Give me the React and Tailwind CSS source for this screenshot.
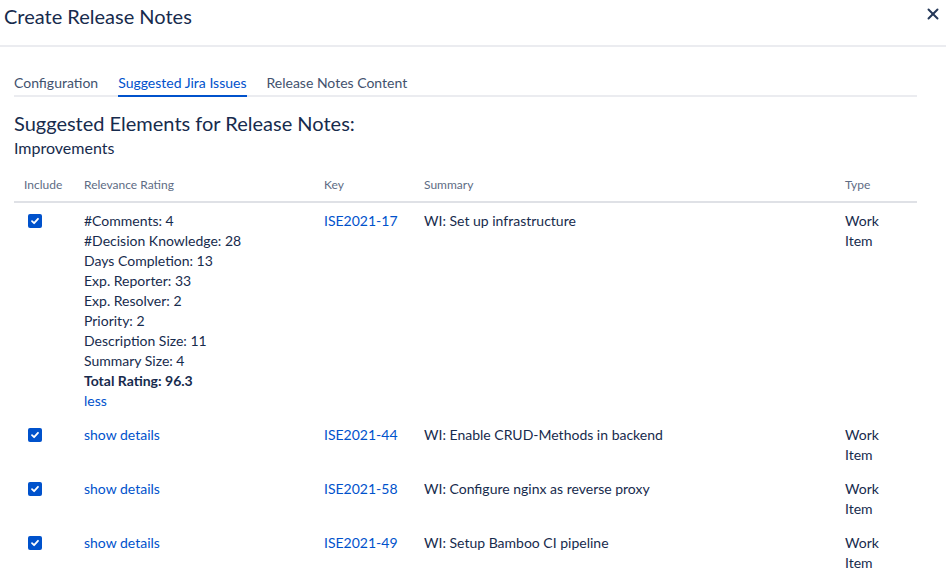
import { X } from "lucide-react";

const rows = [
  {
    key: "ISE2021-17",
    summary: "WI: Set up infrastructure",
    details: [
      "#Comments: 4",
      "#Decision Knowledge: 28",
      "Days Completion: 13",
      "Exp. Reporter: 33",
      "Exp. Resolver: 2",
      "Priority: 2",
      "Description Size: 11",
      "Summary Size: 4",
    ],
    total: "96.3",
  },
  { key: "ISE2021-44", summary: "WI: Enable CRUD-Methods in backend" },
  { key: "ISE2021-58", summary: "WI: Configure nginx as reverse proxy" },
  { key: "ISE2021-49", summary: "WI: Setup Bamboo CI pipeline" },
];

const cols = "grid grid-cols-[60px_240px_100px_421px_82px]";

const Checkbox = () => (
  <div className="ml-1 mt-[3px] w-[14px] h-[14px] rounded-[2px] bg-[#0052cc] flex items-center justify-center">
    <svg width="10" height="10" viewBox="0 0 10 10" fill="none">
      <path d="M2 5.2 L4.1 7.2 L8 2.8" stroke="white" strokeWidth="1.8" strokeLinecap="round" strokeLinejoin="round" />
    </svg>
  </div>
);

function Row({ row }) {
  return (
    <div className={`${cols} text-[14px] leading-5 text-[#172b4d]`}>
      <div className="px-[10px] pt-2 pb-[6px]">
        <Checkbox />
      </div>
      <div className="px-[10px] pt-2 pb-[6px]">
        {row.details ? (
          <>
            {row.details.map((d) => (
              <div key={d}>{d}</div>
            ))}
            <div className="font-bold">Total Rating: {row.total}</div>
            <div className="text-[#0052cc]">less</div>
          </>
        ) : (
          <div className="text-[#0052cc]">show details</div>
        )}
      </div>
      <div className="px-[10px] pt-2 pb-[6px] text-[#0052cc]">{row.key}</div>
      <div className="px-[10px] pt-2 pb-[6px]">{row.summary}</div>
      <div className="px-[10px] pt-2 pb-[6px]">Work Item</div>
    </div>
  );
}

export default function App() {
  return (
    <div className="w-[946px] h-[572px] overflow-hidden bg-white font-['Lato','Liberation_Sans',sans-serif] text-[#172b4d]">
      <div className="h-[47px] border-b-2 border-[#ebecf0] flex justify-between pl-1 pr-[4px] pt-[4px]">
        <h2 className="text-[20px] leading-6">Create Release Notes</h2>
        <X className="w-[18px] h-[18px] mt-px text-[#253858]" strokeWidth={2.6} />
      </div>

      <div className="px-[14px] w-[931px]">
        <div className="mt-[26px] flex gap-5 text-[14px] leading-5 border-b-2 border-[#ebecf0]">
          <span className="pb-[2px] text-[#42526e]">Configuration</span>
          <span className="pb-[2px] -mb-[2px] border-b-2 border-[#0052cc] text-[#0052cc]">Suggested Jira Issues</span>
          <span className="pb-[2px] text-[#42526e]">Release Notes Content</span>
        </div>

        <h3 className="mt-[14px] text-[20px] leading-6">Suggested Elements for Release Notes:</h3>
        <h4 className="mt-[3px] text-[16px] leading-5">Improvements</h4>

        <div className="mt-[19px]">
          <div className={`${cols} text-[12px] leading-4 text-[#5e6c84] border-b-2 border-[#dfe1e6] pb-2`}>
            <div className="px-[10px]">Include</div>
            <div className="px-[10px]">Relevance Rating</div>
            <div className="px-[10px]">Key</div>
            <div className="px-[10px]">Summary</div>
            <div className="px-[10px]">Type</div>
          </div>
          {rows.map((r) => (
            <Row key={r.key} row={r} />
          ))}
        </div>
      </div>
    </div>
  );
}
